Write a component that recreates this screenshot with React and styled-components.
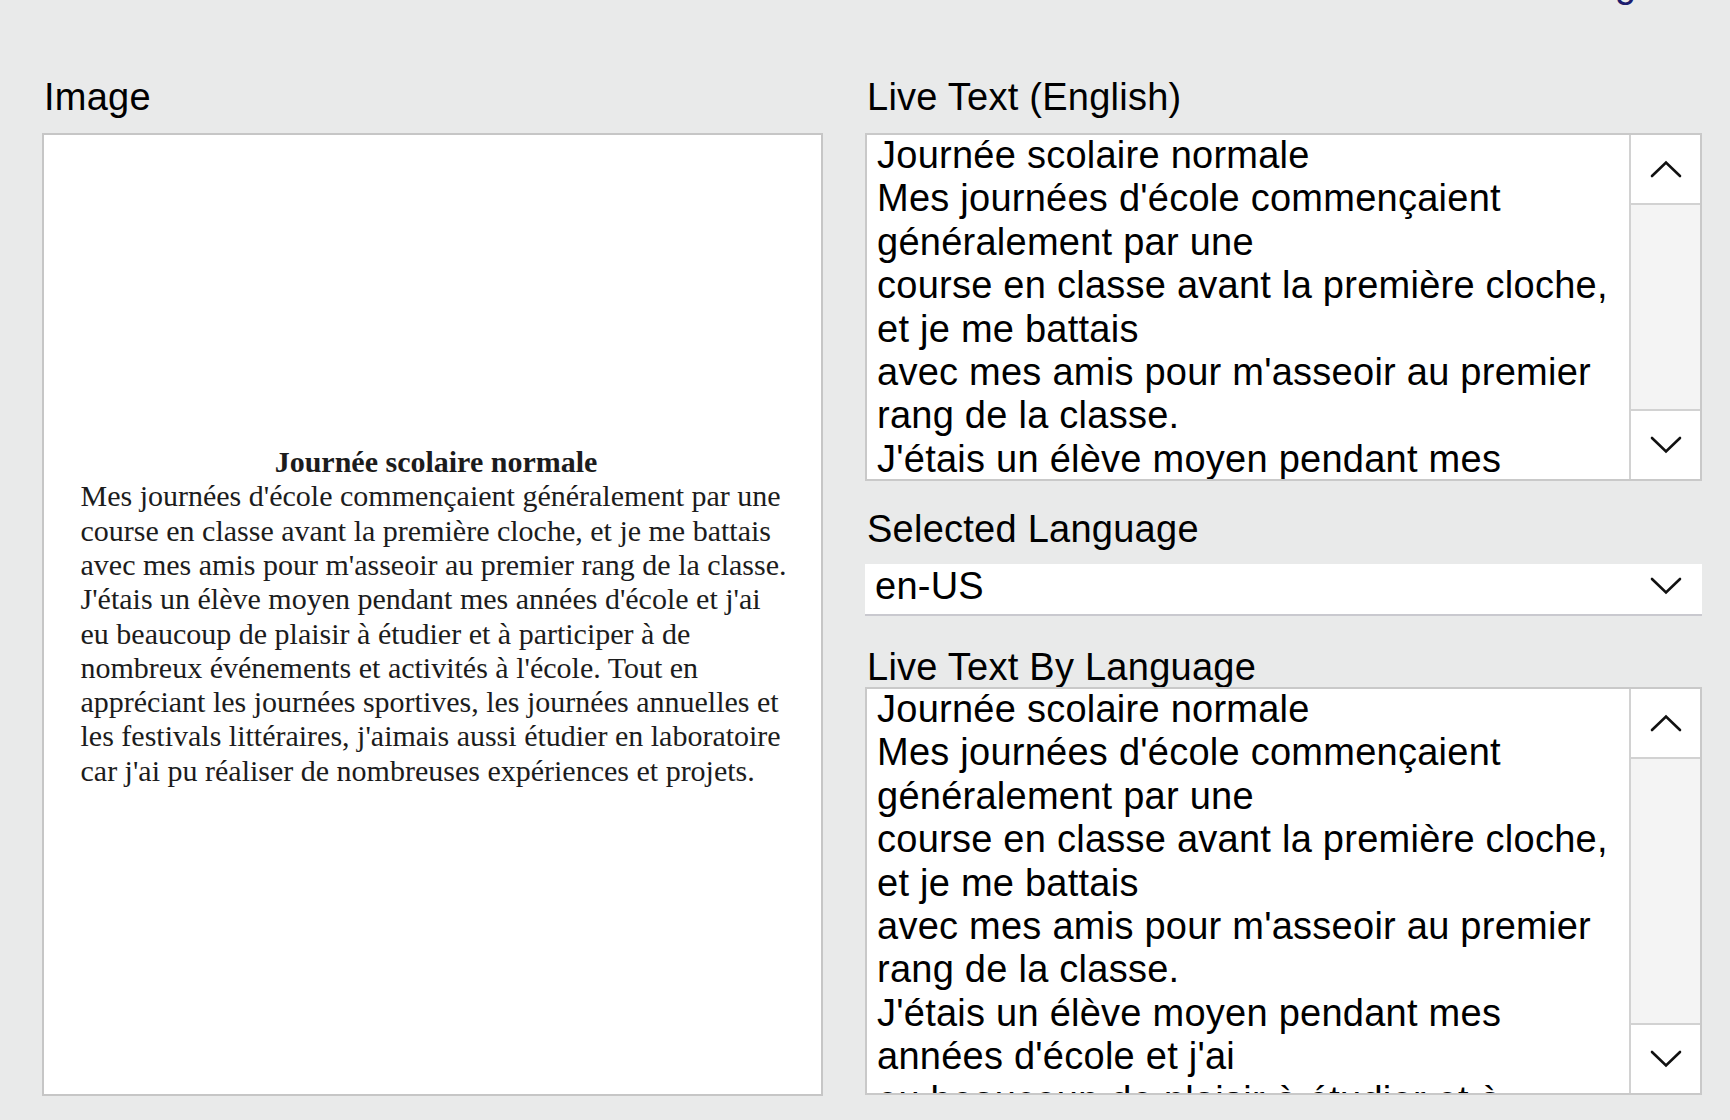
import React from 'react';
import styled, { createGlobalStyle } from 'styled-components';

const GlobalStyle = createGlobalStyle`
  html, body {
    margin: 0;
    padding: 0;
    background: #e9eaea;
  }
  body {
    font-family: "Liberation Sans", Arial, sans-serif;
    font-size: 38px;
    line-height: 43px;
    letter-spacing: 0.25px;
    color: #000;
  }
`;

const ocrText = [
  'Journée scolaire normale',
  "Mes journées d'école commençaient généralement par une",
  'course en classe avant la première cloche, et je me battais',
  "avec mes amis pour m'asseoir au premier rang de la classe.",
  "J'étais un élève moyen pendant mes années d'école et j'ai",
  'eu beaucoup de plaisir à étudier et à participer à de',
  "nombreux événements et activités à l'école. Tout en",
  'appréciant les journées sportives, les journées annuelles et',
  "les festivals littéraires, j'aimais aussi étudier en laboratoire",
  "car j'ai pu réaliser de nombreuses expériences et projets.",
];

const Page = styled.div`
  box-sizing: border-box;
  min-height: 1120px;
  padding: 0 28px 24px 42px;
`;

// only the descender of the link shows under the top edge
const TopBar = styled.div`
  display: flex;
  justify-content: flex-end;
  align-items: flex-end;
  height: 6px;
  padding-right: 12px;
`;

const TopLink = styled.a`
  flex-shrink: 0;
  line-height: 43px;
  color: #1c1c6e;
  text-decoration: none;
`;

const Columns = styled.div`
  display: grid;
  grid-template-columns: 781px 1fr;
  column-gap: 42px;
  margin-top: 70px;
`;

const Column = styled.div`
  display: flex;
  flex-direction: column;
`;

const Label = styled.div`
  line-height: 43px;
  padding-left: 2px;
  margin-top: ${(p) => p.$top || 0}px;
  margin-bottom: ${(p) => p.$bottom}px;
`;

const ImageFrame = styled.div`
  box-sizing: border-box;
  height: 963px;
  padding-top: 4px;
  border: 2px solid #c6c6c6;
  background: #fff;
  display: flex;
  align-items: center;
  justify-content: center;
`;

const Doc = styled.div`
  width: 704px;
  font-family: "Liberation Serif", "Times New Roman", serif;
  font-size: 30px;
  line-height: 34.3px;
  letter-spacing: 0;
  color: #1c1c1c;
`;

const DocTitle = styled.div`
  font-weight: bold;
  text-align: center;
  padding-left: 7px;
`;

const DocLine = styled.div`
  white-space: nowrap;
`;

const TextBox = styled.div`
  box-sizing: border-box;
  height: ${(p) => p.$height}px;
  border: 2px solid #c9c9c9;
  background: #fff;
  display: flex;
  overflow: hidden;
`;

const TextView = styled.div`
  flex: 1;
  min-width: 0;
  overflow: hidden;
  padding: 0 7px 0 10px;
`;

const TextInner = styled.div`
  margin-top: -1px;
  white-space: pre-wrap;
  line-height: 43.4px;
`;

const Scrollbar = styled.div`
  width: 69px;
  flex-shrink: 0;
  border-left: 2px solid #d2d2d2;
  display: flex;
  flex-direction: column;
  background: #fff;
`;

const ScrollButton = styled.div`
  height: 68px;
  display: flex;
  align-items: center;
  justify-content: center;
  border-${(p) => (p.$up ? 'bottom' : 'top')}: 2px solid #d2d2d2;
`;

const Track = styled.div`
  flex: 1;
  background: #f4f4f4;
`;

const Select = styled.div`
  box-sizing: border-box;
  height: 52px;
  background: #fff;
  border-bottom: 2px solid #c9c9cf;
  display: flex;
  align-items: center;
  justify-content: space-between;
  padding: 0 20px 6px 10px;
`;

const Chevron = ({ up }) => (
  <svg width="32" height="18" viewBox="0 0 32 18">
    <path
      d={up ? 'M2 16 L16 2.5 L30 16' : 'M2 2 L16 15.5 L30 2'}
      fill="none"
      stroke="#111"
      strokeWidth="2.6"
      strokeLinecap="round"
      strokeLinejoin="miter"
    />
  </svg>
);

const ScrollText = ({ height, text }) => (
  <TextBox $height={height}>
    <TextView>
      <TextInner>{text}</TextInner>
    </TextView>
    <Scrollbar>
      <ScrollButton $up>
        <Chevron up />
      </ScrollButton>
      <Track />
      <ScrollButton>
        <Chevron />
      </ScrollButton>
    </Scrollbar>
  </TextBox>
);

export default function App() {
  const text = ocrText.join('\n');
  return (
    <>
      <GlobalStyle />
      <Page>
        <TopBar>
          <TopLink href="#">Logout</TopLink>
        </TopBar>
        <Columns>
          <Column>
            <Label $bottom={14}>Image</Label>
            <ImageFrame>
              <Doc>
                <DocTitle>{ocrText[0]}</DocTitle>
                {ocrText.slice(1).map((line) => (
                  <DocLine key={line}>{line}</DocLine>
                ))}
              </Doc>
            </ImageFrame>
          </Column>
          <Column>
            <Label $bottom={14}>Live Text (English)</Label>
            <ScrollText height={348} text={text} />
            <Label $top={27} $bottom={13}>Selected Language</Label>
            <Select>
              <span>en-US</span>
              <Chevron />
            </Select>
            <Label $top={30} $bottom={-2}>Live Text By Language</Label>
            <ScrollText height={408} text={text} />
          </Column>
        </Columns>
      </Page>
    </>
  );
}
